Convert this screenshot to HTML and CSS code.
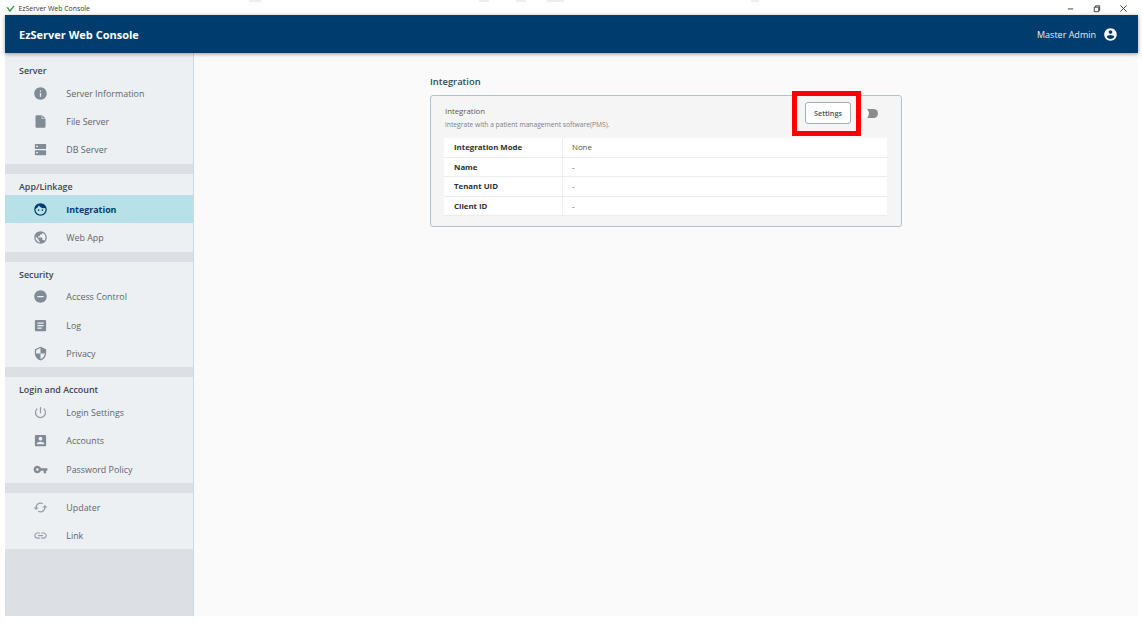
FILE: index.html
```html
<!DOCTYPE html>
<html lang="en">
<head>
<meta charset="utf-8">
<title>EzServer Web Console</title>
<link rel="stylesheet" href="styles.css">
</head>
<body>
<div class="titlebar">
  <span class="mark m1"></span><span class="mark m2"></span><span class="mark m3"></span><span class="mark m4"></span><span class="mark m5"></span>
  <svg class="app-icon" viewBox="0 0 12 10"><path d="M0 3l3 .5L5 7l5-6 2 .5L6 9.500H4.500z" fill="#3a9a4a"/></svg>
  <span class="title-text">EzServer Web Console</span>
  <span class="spacer"></span>
  <svg class="win-btn" viewBox="0 0 10 10"><path d="M2 5.500h6" stroke="#333" fill="none"/></svg>
  <svg class="win-btn" viewBox="0 0 10 10"><path d="M2.500 3.500h5v5h-5zM4 3.500V2h4.500v5H7.500" stroke="#333" fill="none"/></svg>
  <svg class="win-btn" viewBox="0 0 10 10"><path d="M1.500 1.500l7 7M8.500 1.500l-7 7" stroke="#333" fill="none"/></svg>
</div>
<div class="window">
  <header class="appbar">
    <span class="brand">EzServer Web Console</span>
    <span class="user">Master Admin</span>
    <svg class="user-icon" viewBox="0 0 24 24"><path d="M12 2C6.480 2 2 6.480 2 12s4.480 10 10 10 10-4.480 10-10S17.520 2 12 2zm0 3c1.660 0 3 1.340 3 3s-1.340 3-3 3-3-1.340-3-3 1.340-3 3-3zm0 14.200c-2.500 0-4.710-1.280-6-3.220.03-1.990 4-3.080 6-3.080 1.990 0 5.970 1.090 6 3.080-1.290 1.940-3.500 3.220-6 3.220z"/></svg>
  </header>
  <div class="body">
    <nav class="sidebar">
      <section class="group group-first">
        <h3 class="group-title">Server</h3>
        <a class="item"><svg class="ico" viewBox="0 0 24 24"><path d="M12 2C6.480 2 2 6.480 2 12s4.480 10 10 10 10-4.480 10-10S17.520 2 12 2zm1 15h-2v-6h2v6zm0-8h-2V7h2v2z"/></svg>Server Information</a>
        <a class="item"><svg class="ico" viewBox="0 0 24 24"><path d="M6 2c-1.100 0-1.990.9-1.990 2L4 20c0 1.100.89 2 1.990 2H18c1.100 0 2-.9 2-2V8h-6V2H6zm9 0v5h5l-5-5z"/></svg>File Server</a>
        <a class="item"><svg class="ico" viewBox="0 0 24 24"><path d="M20 13H4c-.55 0-1 .45-1 1v6c0 .55.45 1 1 1h16c.55 0 1-.45 1-1v-6c0-.55-.45-1-1-1zM8 18H5v-2h3v2zM20 3H4c-.55 0-1 .45-1 1v6c0 .55.45 1 1 1h16c.55 0 1-.45 1-1V4c0-.55-.45-1-1-1zM8 8H5V6h3v2z"/></svg>DB Server</a>
      </section>
      <section class="group">
        <h3 class="group-title">App/Linkage</h3>
        <a class="item active"><svg class="ico" viewBox="0 0 24 24"><path d="M9 11.750c-.69 0-1.250.56-1.250 1.250s.56 1.250 1.250 1.250 1.250-.56 1.250-1.250-.56-1.250-1.250-1.250zm6 0c-.69 0-1.250.56-1.250 1.250s.56 1.250 1.250 1.250 1.250-.56 1.250-1.250-.56-1.250-1.250-1.250zM12 2C6.480 2 2 6.480 2 12s4.480 10 10 10 10-4.480 10-10S17.520 2 12 2zm0 18c-4.410 0-8-3.590-8-8 0-.29.02-.58.05-.86 2.360-1.050 4.230-2.980 5.210-5.370C11.070 8.330 14.050 10 17.420 10c.78 0 1.530-.09 2.250-.26.21.71.33 1.470.33 2.260 0 4.410-3.590 8-8 8z"/></svg>Integration</a>
        <a class="item"><svg class="ico" viewBox="0 0 24 24"><path d="M12 2C6.480 2 2 6.480 2 12s4.480 10 10 10 10-4.480 10-10S17.520 2 12 2zm-1 17.930c-3.950-.49-7-3.850-7-7.930 0-.62.08-1.210.21-1.790L9 15v1c0 1.100.9 2 2 2v1.930zm6.900-2.540c-.26-.81-1-1.390-1.900-1.390h-1v-3c0-.55-.45-1-1-1H8v-2h2c.55 0 1-.45 1-1V7h2c1.100 0 2-.9 2-2v-.41c2.930 1.190 5 4.060 5 7.410 0 2.080-.8 3.970-2.100 5.390z"/></svg>Web App</a>
      </section>
      <section class="group">
        <h3 class="group-title">Security</h3>
        <a class="item"><svg class="ico" viewBox="0 0 24 24"><path d="M12 2C6.480 2 2 6.480 2 12s4.480 10 10 10 10-4.480 10-10S17.520 2 12 2zm5 11H7v-2h10v2z"/></svg>Access Control</a>
        <a class="item"><svg class="ico" viewBox="0 0 24 24"><path d="M19 3H5c-1.100 0-2 .9-2 2v14c0 1.100.9 2 2 2h14c1.100 0 2-.9 2-2V5c0-1.100-.9-2-2-2zm-5 14H7v-2h7v2zm3-4H7v-2h10v2zm0-4H7V7h10v2z"/></svg>Log</a>
        <a class="item"><svg class="ico" viewBox="0 0 24 24"><path d="M12 1L3 5v6c0 5.550 3.840 10.740 9 12 5.160-1.260 9-6.450 9-12V5l-9-4zm0 10.990h7c-.53 4.120-3.280 7.790-7 8.940V12H5V6.300l7-3.110v8.800z"/></svg>Privacy</a>
      </section>
      <section class="group">
        <h3 class="group-title">Login and Account</h3>
        <a class="item"><svg class="ico ico-thin" viewBox="0 0 24 24"><path d="M13 3h-2v10h2V3zm4.830 2.170l-1.420 1.420C17.990 7.860 19 9.810 19 12c0 3.870-3.130 7-7 7s-7-3.130-7-7c0-2.190 1.010-4.140 2.580-5.420L6.170 5.170C4.230 6.820 3 9.260 3 12c0 4.970 4.030 9 9 9s9-4.030 9-9c0-2.740-1.230-5.180-3.170-6.830z"/></svg>Login Settings</a>
        <a class="item"><svg class="ico" viewBox="0 0 24 24"><path d="M3 5v14c0 1.100.89 2 2 2h14c1.100 0 2-.9 2-2V5c0-1.100-.9-2-2-2H5c-1.110 0-2 .9-2 2zm12 4c0 1.660-1.340 3-3 3s-3-1.340-3-3 1.340-3 3-3 3 1.340 3 3zm-9 8c0-2 4-3.100 6-3.100s6 1.100 6 3.100v1H6v-1z"/></svg>Accounts</a>
        <a class="item"><svg class="ico" viewBox="0 0 24 24"><path d="M12.650 10C11.830 7.670 9.610 6 7 6c-3.310 0-6 2.690-6 6s2.690 6 6 6c2.610 0 4.830-1.670 5.650-4H17v4h4v-4h2v-4H12.650zM7 14c-1.100 0-2-.9-2-2s.9-2 2-2 2 .9 2 2-.9 2-2 2z"/></svg>Password Policy</a>
      </section>
      <section class="group group-plain">
        <a class="item"><svg class="ico ico-thin" viewBox="0 0 24 24"><path d="M19 8l-4 4h3c0 3.310-2.690 6-6 6-1.010 0-1.970-.25-2.800-.7l-1.460 1.460C8.970 19.540 10.430 20 12 20c4.420 0 8-3.580 8-8h3l-4-4zM6 12c0-3.310 2.690-6 6-6 1.010 0 1.970.25 2.800.7l1.460-1.460C15.030 4.460 13.570 4 12 4c-4.420 0-8 3.580-8 8H1l4 4 4-4H6z"/></svg>Updater</a>
        <a class="item"><svg class="ico ico-thin" viewBox="0 0 24 24"><path d="M3.900 12c0-1.710 1.390-3.100 3.100-3.100h4V7H7c-2.760 0-5 2.240-5 5s2.240 5 5 5h4v-1.900H7c-1.710 0-3.100-1.390-3.100-3.100zM8 13h8v-2H8v2zm9-6h-4v1.900h4c1.710 0 3.100 1.390 3.100 3.100s-1.390 3.100-3.100 3.100h-4V17h4c2.760 0 5-2.240 5-5s-2.240-5-5-5z"/></svg>Link</a>
      </section>
    </nav>
    <main class="content">
      <div class="panel">
        <h2 class="page-title">Integration</h2>
        <div class="card">
          <div class="card-head">
            <div class="card-text">
              <div class="card-title">Integration</div>
              <div class="card-desc">Integrate with a patient management software(PMS).</div>
            </div>
            <button class="btn">Settings</button>
            <span class="toggle"><span class="knob"></span></span>
            <span class="highlight"></span>
          </div>
          <div class="table">
            <div class="row"><div class="key">Integration Mode</div><div class="val">None</div></div>
            <div class="row"><div class="key">Name</div><div class="val">-</div></div>
            <div class="row"><div class="key">Tenant UID</div><div class="val">-</div></div>
            <div class="row"><div class="key">Client ID</div><div class="val">-</div></div>
          </div>
        </div>
      </div>
    </main>
  </div>
</div>
</body>
</html>
```
FILE: styles.css
```css
* { box-sizing: border-box; }
html, body { height: 100%; }
body {
  margin: 0;
  background: #fff;
  font-family: "Open Sans", "Noto Sans", sans-serif;
  color: #444;
  overflow: hidden;
  display: flex;
  flex-direction: column;
}
.titlebar {
  height: 15px;
  flex: none;
  display: flex;
  align-items: center;
  padding: 2px 14.500px 0 6px;
  color: #333;
  position: relative;
}
.mark { position: absolute; top: 0; height: 2px; background: #eeeeee; }
.m1 { left: 249px; width: 12px; }
.m2 { left: 479px; width: 10px; }
.m3 { left: 516px; width: 10px; }
.m4 { left: 547px; width: 17px; }
.m5 { left: 751px; width: 8px; }
.app-icon { width: 9px; height: 7px; margin-right: 3.500px; }
.title-text { font-size: 6.900px; }
.spacer { flex: 1; }
.win-btn { width: 9px; height: 9px; margin-left: 17.500px; }
.window {
  flex: 1;
  margin: 0 4px 6px 5px;
  display: flex;
  flex-direction: column;
  min-height: 0;
}
.appbar {
  height: 38px;
  flex: none;
  background: #003d6e;
  color: #fff;
  display: flex;
  align-items: center;
  padding: 0 20px 0 14px;
  box-shadow: 0 1px 4px rgba(0, 0, 0, .4);
  position: relative;
}
.brand { font-size: 11px; font-weight: 700; flex: 1; }
.user { font-size: 9px; color: #e6edf3; margin-right: 7px; }
.user-icon { width: 15px; height: 15px; fill: #fff; }
.body { flex: 1; display: flex; min-height: 0; }
.sidebar {
  width: 189px;
  flex: none;
  background: #dcdfe3;
  border-right: 1px solid #d4d7db;
}
.group { background: #edf0f3; margin-bottom: 10px; }
.group-first { padding-top: 5.200px; }
.group-plain { margin-bottom: 0; }
.group-plain .item { height: 28px; }
.group-title {
  margin: 0;
  height: 21.250px;
  padding-left: 14px;
  font-size: 8.900px;
  font-weight: 600;
  line-height: 26px;
  color: #3c4650;
}
.item {
  height: 28.200px;
  display: flex;
  align-items: center;
  padding-left: 28px;
  font-size: 8.900px;
  color: #5f656c;
}
.item .ico { width: 15px; height: 15px; margin-right: 18.300px; fill: #808b96; }
.item .ico-thin { fill: #959ea7; }
.item.active { background: #b7e0e8; color: #003d6e; font-weight: 700; }
.item.active .ico { fill: #003d6e; }
.content { flex: 1; background: #fafafa; padding: 0 0 0 236px; }
.panel { width: 472px; }
.page-title {
  margin: 0;
  height: 42px;
  padding-top: 22px;
  font-size: 9.400px;
  line-height: 14px;
  font-weight: 600;
  color: #2f4a5e;
}
.card {
  height: 131.500px;
  border: 1px solid #b9c0c7;
  border-radius: 3px;
  background: #f5f5f5;
  padding: 0 14px 0 13px;
}
.card-head { height: 42px; display: flex; align-items: flex-start; position: relative; }
.card-text { flex: 1; padding: 8px 0 0 1px; }
.card-title { font-size: 7.800px; line-height: 14px; color: #555; }
.card-desc { font-size: 6.700px; line-height: 13px; color: #7b8288; }
.btn {
  width: 46px;
  height: 22px;
  margin: 6px 13px 0 0;
  padding: 0;
  background: #fff;
  border: 1px solid #9eb0bf;
  border-radius: 3px;
  font: 600 7.200px "Open Sans", sans-serif;
  color: #33536b;
}
.toggle {
  width: 14px;
  height: 9px;
  margin: 13px 9px 0 0;
  background: #8c8c8c;
  border-radius: 4.500px;
  position: relative;
}
.knob {
  position: absolute;
  left: -6px;
  top: -1px;
  width: 11px;
  height: 11px;
  border-radius: 50%;
  background: #fff;
  box-shadow: 0 0 1px rgba(0, 0, 0, .25);
}
.highlight {
  position: absolute;
  left: 348px;
  top: -5px;
  width: 69px;
  height: 45px;
  border: 5px solid #f00;
  pointer-events: none;
}
.table { background: #fff; }
.row { display: flex; height: 19.600px; border-bottom: 1px solid #ececec; align-items: center; }
.key {
  width: 119px;
  height: 100%;
  border-right: 1px solid #ececec;
  padding-left: 10px;
  font-size: 7.850px;
  line-height: 19px;
  font-weight: 700;
  color: #2b2f33;
}
.val { padding-left: 9px; font-size: 7.850px; color: #555; }
```
